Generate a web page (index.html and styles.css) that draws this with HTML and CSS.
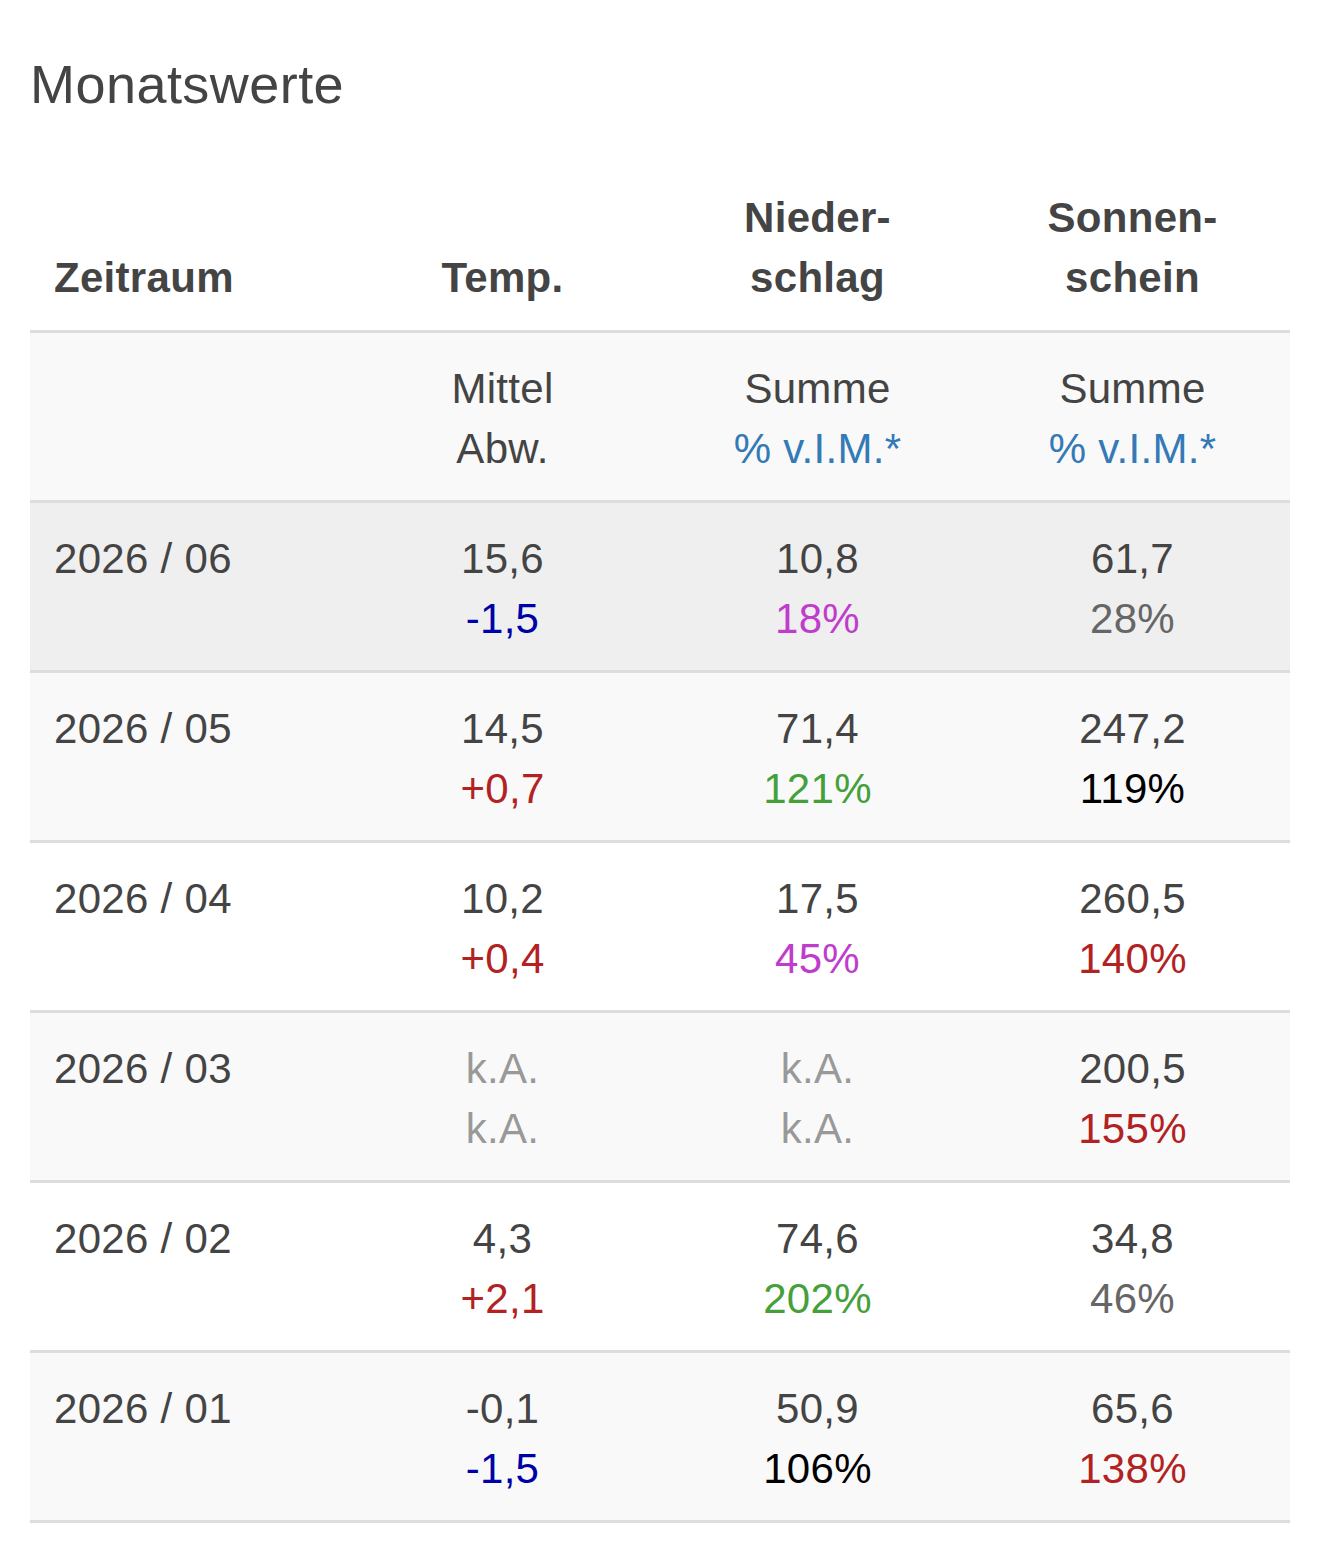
FILE: index.html
```html
<!DOCTYPE html>
<html lang="de">
<head>
<meta charset="utf-8">
<title>Monatswerte</title>
<link rel="stylesheet" href="styles.css">
</head>
<body>
<div class="page">
  <h2 class="title">Monatswerte</h2>
  <table class="values">
    <thead>
      <tr>
        <th class="first">Zeitraum</th>
        <th>Temp.</th>
        <th>Nieder-<br>schlag</th>
        <th>Sonnen-<br>schein</th>
      </tr>
    </thead>
    <tbody>
      <tr class="odd">
        <td class="first"></td>
        <td>Mittel<br>Abw.</td>
        <td>Summe<br><span class="link">% v.I.M.*</span></td>
        <td>Summe<br><span class="link">% v.I.M.*</span></td>
      </tr>
      <tr class="current">
        <td class="first">2026 / 06</td>
        <td>15,6<br><span class="cold">-1,5</span></td>
        <td>10,8<br><span class="dry">18%</span></td>
        <td>61,7<br><span class="dim">28%</span></td>
      </tr>
      <tr class="odd">
        <td class="first">2026 / 05</td>
        <td>14,5<br><span class="warm">+0,7</span></td>
        <td>71,4<br><span class="wet">121%</span></td>
        <td>247,2<br><span class="normal">119%</span></td>
      </tr>
      <tr>
        <td class="first">2026 / 04</td>
        <td>10,2<br><span class="warm">+0,4</span></td>
        <td>17,5<br><span class="dry">45%</span></td>
        <td>260,5<br><span class="warm">140%</span></td>
      </tr>
      <tr class="odd">
        <td class="first">2026 / 03</td>
        <td><span class="na">k.A.</span><br><span class="na">k.A.</span></td>
        <td><span class="na">k.A.</span><br><span class="na">k.A.</span></td>
        <td>200,5<br><span class="warm">155%</span></td>
      </tr>
      <tr>
        <td class="first">2026 / 02</td>
        <td>4,3<br><span class="warm">+2,1</span></td>
        <td>74,6<br><span class="wet">202%</span></td>
        <td>34,8<br><span class="dim">46%</span></td>
      </tr>
      <tr class="odd">
        <td class="first">2026 / 01</td>
        <td>-0,1<br><span class="cold">-1,5</span></td>
        <td>50,9<br><span class="normal">106%</span></td>
        <td>65,6<br><span class="warm">138%</span></td>
      </tr>
    </tbody>
  </table>
</div>
</body>
</html>
```
FILE: styles.css
```css
html, body {
  margin: 0;
  padding: 0;
  background: #ffffff;
}

body {
  font-family: "Liberation Sans", Arial, sans-serif;
  color: #444444;
  font-size: 42px;
  line-height: 60px;
  letter-spacing: 0.3px;
}

.page {
  padding: 0 30px;
}

.title {
  margin: 54px 0 48px;
  font-size: 54px;
  line-height: 60px;
  font-weight: normal;
  letter-spacing: 0.45px;
  color: #444444;
}

.values {
  width: 100%;
  table-layout: fixed;
  border-collapse: separate;
  border-spacing: 0;
}

.values th,
.values td {
  width: 25%;
  text-align: center;
  padding: 26px 24px 21px;
  border-bottom: 3px solid #dddddd;
  vertical-align: top;
}

.values th {
  font-weight: bold;
  vertical-align: bottom;
  padding-bottom: 22px;
  color: #444444;
}

.values .first {
  text-align: left;
}

.values tr.odd td {
  background: #f9f9f9;
}

.values tr.current td {
  background: #efefef;
}

.link { color: #337ab7; }
.cold { color: #0000a8; }
.warm { color: #b22222; }
.dry { color: #c03ccc; }
.wet { color: #45a03a; }
.dim { color: #666666; }
.normal { color: #000000; }
.na { color: #999999; }
```
